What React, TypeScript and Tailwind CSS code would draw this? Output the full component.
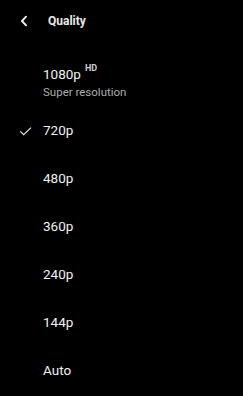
import React from 'react';

const qualities = ['720p', '480p', '360p', '240p', '144p', 'Auto'];

function Check() {
  return (
    <svg viewBox="0 0 24 24" className="h-[16px] w-[16px]" fill="none" stroke="currentColor" strokeWidth={1.6}>
      <path d="M3.5 12.5l5 5L19.5 7" />
    </svg>
  );
}

export default function App() {
  return (
    <div
      className="h-[396px] w-[243px] bg-black text-[#f1f1f1] overflow-hidden"
      style={{ fontFamily: 'Roboto, "Liberation Sans", sans-serif' }}
    >
      {/* Header */}
      <div className="flex h-[42px] items-center">
        <div className="flex w-[48px] items-center pl-[17px]">
          <svg viewBox="0 0 24 24" className="h-[14px] w-[14px]" fill="none" stroke="currentColor" strokeWidth={3.2} strokeLinecap="round" strokeLinejoin="round">
            <path d="M15.5 4.5l-7 7.5 7 7.5" />
          </svg>
        </div>
        <span className="text-[12px] font-bold text-[#e8e8e8]">Quality</span>
      </div>

      <ul className="mt-[16px]">
        <li className="flex h-12 items-center">
          <div className="w-[43px]" />
          <div className="flex flex-col pt-[1px]">
            <div className="flex items-start text-[13.5px] leading-[16px]">
              1080p
              <span className="ml-[4px] mt-[-3px] text-[9px] font-bold leading-[10px] text-[#d0d0d0]">HD</span>
            </div>
            <span className="mt-[4px] text-[11.5px] leading-[13px] text-[#aaaaaa]">Super resolution</span>
          </div>
        </li>
        {qualities.map((q) => (
          <li key={q} className="flex h-12 items-center">
            <div className="flex w-[43px] items-center pl-[18px] pt-[1px]">
              {q === '720p' && <Check />}
            </div>
            <span className="text-[13.5px] leading-[16px]">{q}</span>
          </li>
        ))}
      </ul>
    </div>
  );
}
